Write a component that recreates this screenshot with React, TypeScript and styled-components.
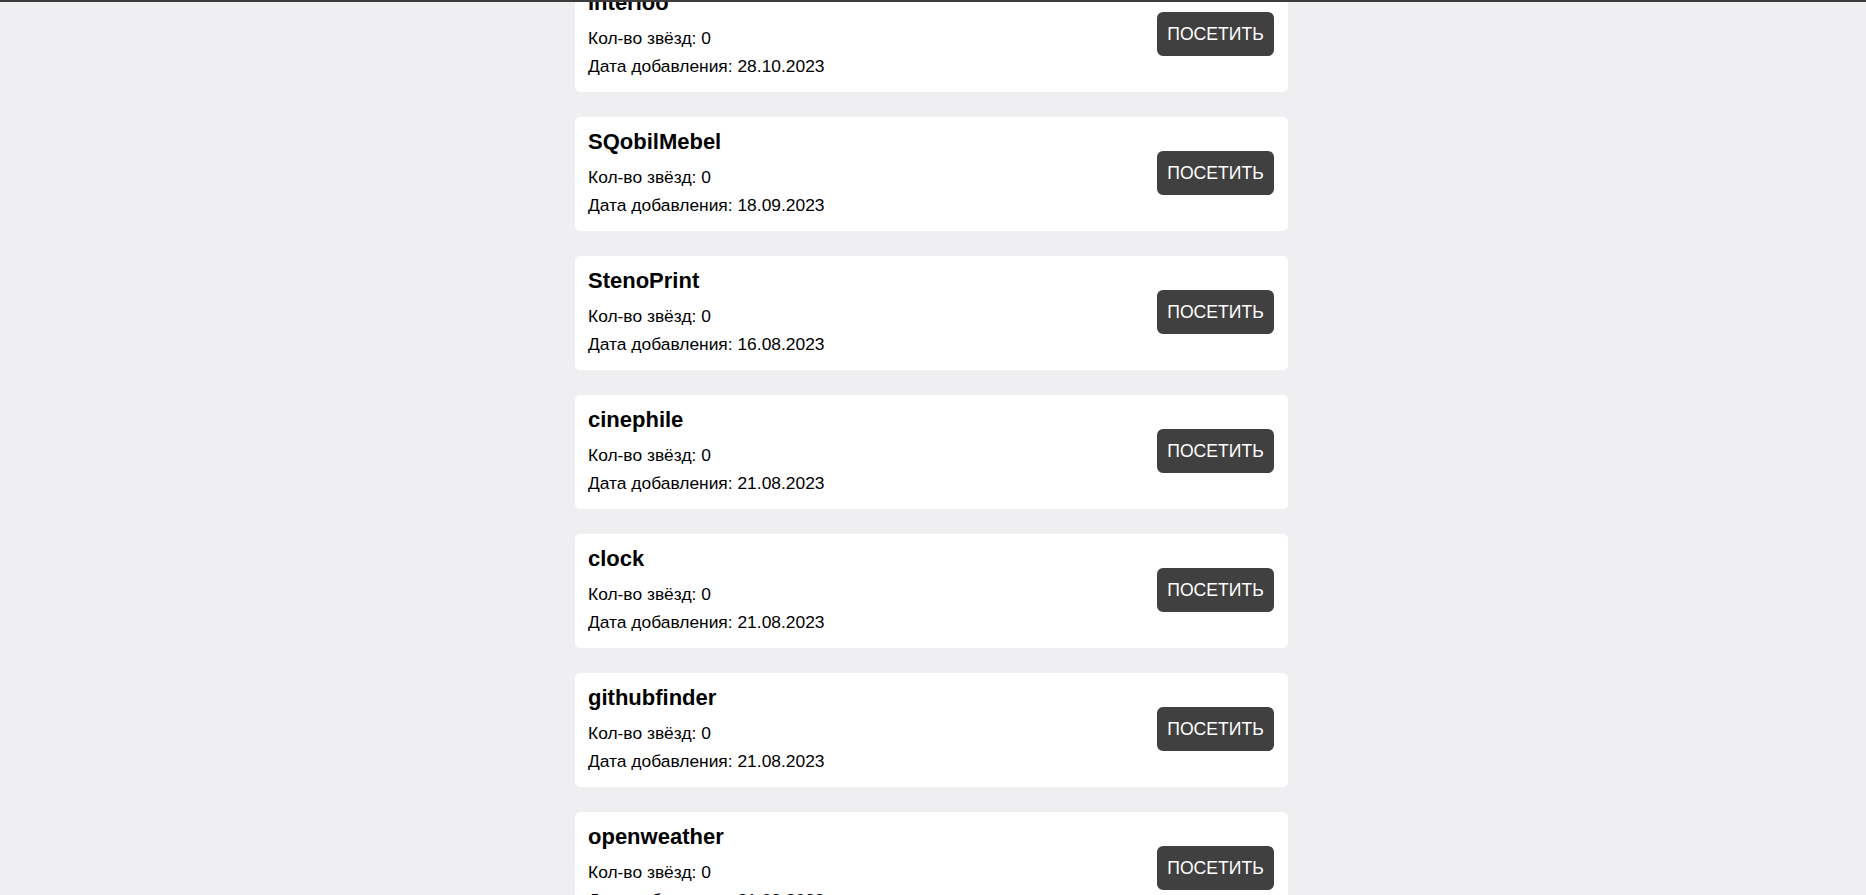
import styled, { createGlobalStyle } from 'styled-components';

interface Repo {
  name: string;
  stars: number;
  date: string;
}

const repos: Repo[] = [
  { name: 'Interioo', stars: 0, date: '28.10.2023' },
  { name: 'SQobilMebel', stars: 0, date: '18.09.2023' },
  { name: 'StenoPrint', stars: 0, date: '16.08.2023' },
  { name: 'cinephile', stars: 0, date: '21.08.2023' },
  { name: 'clock', stars: 0, date: '21.08.2023' },
  { name: 'githubfinder', stars: 0, date: '21.08.2023' },
  { name: 'openweather', stars: 0, date: '21.08.2023' },
];

const GlobalStyle = createGlobalStyle`
  html, body {
    margin: 0;
    padding: 0;
    background: #efeff1;
    overflow: hidden;
  }
  body {
    font-family: 'Liberation Sans', Arial, sans-serif;
    color: #000;
  }
`;

const RepoCard = ({ repo }: { repo: Repo }) => (
  <Card>
    <Info>
      <Title>{repo.name}</Title>
      <Text>Кол-во звёзд: {repo.stars}</Text>
      <Text>Дата добавления: {repo.date}</Text>
    </Info>
    <VisitButton>Посетить</VisitButton>
  </Card>
);

const App = () => (
  <>
    <GlobalStyle />
    <TopBar />
    <Page>
      <List>
        {repos.map((repo) => (
          <RepoCard key={repo.name} repo={repo} />
        ))}
      </List>
    </Page>
  </>
);

const TopBar = styled.div`
  height: 2px;
  background: #3c3c3c;
  position: relative;
  z-index: 1;
`;

const Page = styled.main`
  display: flex;
  justify-content: center;
  align-items: flex-start;
  padding-right: 3px;
  height: 893px;
  overflow: hidden;
`;

const List = styled.div`
  width: 713px;
  margin-top: -24px;
  display: flex;
  flex-direction: column;
  gap: 25px;
`;

const Card = styled.div`
  flex-shrink: 0;
  display: flex;
  align-items: center;
  justify-content: space-between;
  height: 114px;
  box-sizing: border-box;
  padding: 12px 14px 16px 13px;
  background: #fff;
  border-radius: 5px;
`;

const Info = styled.div`
  display: flex;
  flex-direction: column;
  align-self: flex-start;
`;

const Title = styled.h3`
  margin: 0 0 12px;
  font-size: 22px;
  font-weight: 700;
  line-height: 26px;
`;

const Text = styled.p`
  margin: 0;
  font-size: 17.4px;
  line-height: 20px;

  & + & {
    margin-top: 8px;
  }
`;

const VisitButton = styled.button`
  width: 117px;
  height: 44px;
  margin-top: 2px;
  padding: 0;
  border: none;
  border-radius: 6px;
  background: #404040;
  color: #fff;
  font-family: 'Liberation Sans', Arial, sans-serif;
  font-size: 17.6px;
  text-transform: uppercase;
  cursor: pointer;
`;

export default App;
